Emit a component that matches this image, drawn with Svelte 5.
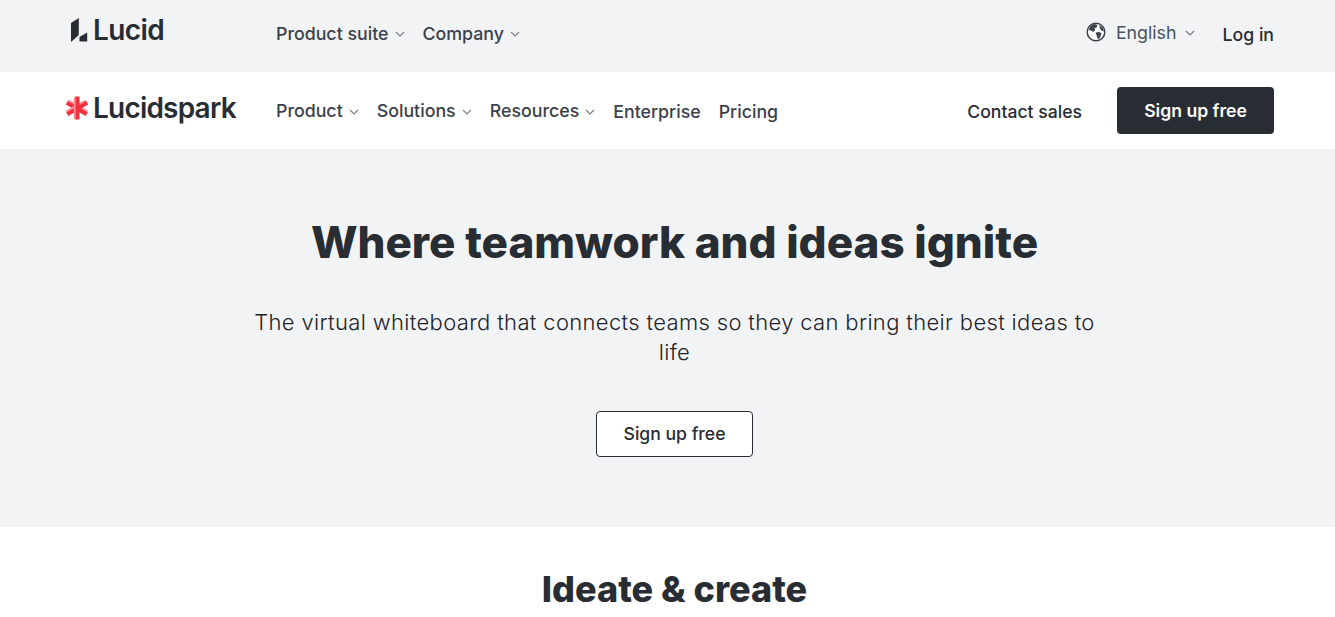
<script>
  const suiteLinks = [
    { label: "Product suite", caret: true },
    { label: "Company", caret: true },
  ];
  const productLinks = [
    { label: "Product", caret: true },
    { label: "Solutions", caret: true },
    { label: "Resources", caret: true },
    { label: "Enterprise", caret: false },
    { label: "Pricing", caret: false },
  ];
</script>

{#snippet caret()}
  <svg class="caret" viewBox="0 0 10 6" width="10" height="6" aria-hidden="true">
    <path d="M1 1l4 4 4-4" fill="none" stroke="currentColor" stroke-width="1.200" />
  </svg>
{/snippet}

{#snippet navLinks(links)}
  <ul class="links">
    {#each links as link}
      <li class="link" class:plain={!link.caret}>
        {link.label}
        {#if link.caret}{@render caret()}{/if}
      </li>
    {/each}
  </ul>
{/snippet}

{#snippet sparkArm(angle)}
  <g transform="rotate({angle} 12 12)">
    <rect x="10" y="0.500" width="4.500" height="23" fill="#f4303c" />
    <rect x="8.800" y="1.500" width="1.800" height="21.500" fill="#ff8f97" />
  </g>
{/snippet}

<header class="suite-bar">
  <div class="brand">
    <svg class="lucid-mark" viewBox="0 0 17 24" width="17" height="24" aria-hidden="true">
      <path d="M0 5L7.800 0v17L0 24z" fill="#282c33" />
      <path d="M8.500 19l7.700-4.500V23.500H8.500z" fill="#282c33" />
    </svg>
    <span class="lucid-word">Lucid</span>
  </div>
  {@render navLinks(suiteLinks)}
  <div class="right">
    <div class="lang">
      <svg viewBox="0 0 20 20" width="20" height="20" aria-hidden="true">
        <circle cx="10" cy="10" r="8.800" fill="#fff" stroke="#3a414a" stroke-width="1.500" />
        <path d="M5 3.500l3.500-1.500 3 1-1 2.500-2 .5.500 2-1.500 2-2.500-1.500L2.500 8zM9.500 10.500l4-.5 2 1.500-1.500 4-2 2-1-3zM13 3l3.500 2.500L18 9.500l-2.500-1-1.500-2z" fill="#3a414a" />
      </svg>
      <span>English</span>
      {@render caret()}
    </div>
    <span class="login">Log in</span>
  </div>
</header>

<nav class="product-bar">
  <div class="brand spark">
    <svg viewBox="0 0 24 24" width="24" height="24" aria-hidden="true">
      {@render sparkArm(120)}
      {@render sparkArm(60)}
      {@render sparkArm(0)}
    </svg>
    <span class="spark-word">Lucidspark</span>
  </div>
  {@render navLinks(productLinks)}
  <div class="right">
    <span class="contact">Contact sales</span>
    <button class="signup solid">Sign up free</button>
  </div>
</nav>

<main>
  <section class="hero">
    <h1>Where teamwork and ideas ignite</h1>
    <p>The virtual whiteboard that connects teams so they can bring their best ideas to life</p>
    <button class="signup outline">Sign up free</button>
  </section>
  <section class="ideate">
    <h2>Ideate &amp; create</h2>
  </section>
</main>

<style>
  :global(body) {
    font-family: Inter, "Liberation Sans", sans-serif;
    color: #282c33;
    background: #fff;
    overflow: hidden;
  }

  .suite-bar,
  .product-bar {
    display: flex;
    align-items: center;
    padding: 0 61px 0 65px;
    box-sizing: border-box;
  }

  .suite-bar {
    height: 72px;
    padding-bottom: 6px;
    background: #f2f3f5;
  }

  .product-bar {
    height: 77px;
    background: #fff;
  }

  .brand {
    display: flex;
    align-items: center;
    width: 211px;
    flex: none;
  }

  .lucid-mark {
    margin-left: 6px;
    margin-right: 5px;
    margin-top: -6px;
  }

  .lucid-word,
  .spark-word {
    font-weight: 600;
    font-size: 28px;
    letter-spacing: -0.6px;
    color: #282c33;
  }

  .lucid-word {
    margin-top: -6px;
  }

  .spark-word {
    margin-top: -5px;
    letter-spacing: -0.8px;
  }

  .spark svg {
    margin-right: 4px;
    margin-top: -5px;
  }

  .links {
    display: flex;
    gap: 18px;
    list-style: none;
    margin: 0;
    padding: 0;
  }

  .link {
    display: flex;
    align-items: center;
    gap: 6px;
    font-size: 17.800px;
    font-weight: 500;
    color: #3a414a;
  }

  .plain {
    margin-top: 2px;
  }

  .caret {
    color: #7a8089;
    margin-top: 2px;
  }

  .right {
    margin-left: auto;
    display: flex;
    align-items: center;
  }

  .lang {
    display: flex;
    align-items: center;
    gap: 10px;
    font-size: 17.800px;
    color: #4a5260;
    margin-right: 28px;
    margin-top: -2px;
  }

  .lang .caret {
    margin-left: -2px;
  }

  .login {
    font-size: 17.700px;
    font-weight: 500;
    margin-top: 3px;
  }

  .contact {
    font-size: 17.600px;
    font-weight: 500;
    margin-right: 35px;
    margin-top: 2px;
  }

  .signup {
    font-family: inherit;
    font-size: 17.600px;
    font-weight: 500;
    border-radius: 4px;
    height: 47px;
  }

  .solid {
    width: 157px;
    color: #fff;
    background: #282c33;
    border: 0;
    font-weight: 600;
  }

  .hero {
    height: 378px;
    box-sizing: border-box;
    background: #f2f3f5;
    padding: 65px 0 0 14px;
    display: flex;
    flex-direction: column;
    align-items: center;
    text-align: center;
  }

  h1 {
    margin: 0;
    font-size: 44px;
    line-height: 56px;
    font-weight: 800;
  }

  .hero p {
    width: 860px;
    margin: 37px 0 0;
    font-size: 22px;
    line-height: 30px;
    font-weight: 300;
    letter-spacing: 0.34px;
    color: #1f2329;
  }

  .outline {
    width: 157px;
    height: 46px;
    margin-top: 44px;
    padding-bottom: 3px;
    background: #fff;
    color: #282c33;
    border: 1px solid #282c33;
  }

  .ideate {
    padding: 41px 0 0 14px;
    text-align: center;
  }

  h2 {
    margin: 0;
    font-size: 36px;
    line-height: 42px;
    font-weight: 800;
  }
</style>
